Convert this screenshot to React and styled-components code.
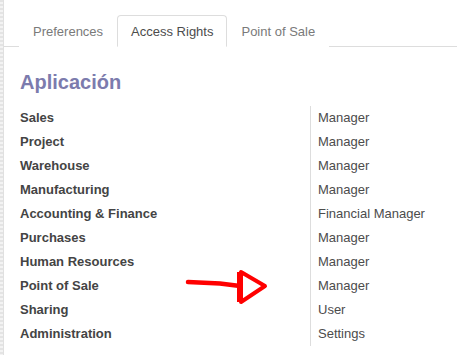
import React from "react";
import styled, { createGlobalStyle } from "styled-components";

const Global = createGlobalStyle`
  html, body { margin: 0; padding: 0; background: #fff; }
  body { font-family: "Liberation Sans", Arial, sans-serif; }
`;

const Page = styled.div`
  position: relative;
  display: flex;
  width: 457px;
  height: 355px;
  overflow: hidden;
  background: #fff;
`;

const EdgeStrip = styled.div`
  width: 3px;
  flex: none;
  background: repeating-linear-gradient(
    to bottom,
    #e4e4e4 0px,
    #e4e4e4 2px,
    #f3f3f3 2px,
    #f3f3f3 4px
  );
  border-right: 1px solid #e0e0e0;
`;

const Main = styled.div`
  flex: 1;
  display: flex;
  flex-direction: column;
`;

const TabBar = styled.div`
  display: flex;
  align-items: flex-end;
  height: 46px;
  padding-left: 15px;
  border-bottom: 1px solid #dddddd;
`;

const Tab = styled.div`
  box-sizing: border-box;
  height: 32px;
  margin-bottom: -1px;
  padding: 0 13px;
  display: flex;
  align-items: center;
  font-size: 13px;
  color: ${(p) => (p.$active ? "#4c4c4c" : "#7a7a7a")};
  background: #fff;
  border: 1px solid ${(p) => (p.$active ? "#dddddd" : "transparent")};
  border-bottom-color: ${(p) => (p.$active ? "#fff" : "transparent")};
  border-radius: 4px 4px 0 0;
`;

const Body = styled.div`
  padding: 23px 0 0 16px;
`;

const Heading = styled.h2`
  margin: 0 0 12px;
  font-size: 20px;
  line-height: 24px;
  font-weight: bold;
  color: #7c7bad;
`;

const Table = styled.div`
  display: grid;
  grid-template-columns: 290px 1fr;
`;

const Label = styled.div`
  height: 24px;
  line-height: 24px;
  font-size: 13px;
  font-weight: bold;
  color: #444444;
  white-space: nowrap;
`;

const Value = styled.div`
  height: 24px;
  line-height: 24px;
  font-size: 13px;
  color: #4c4c4c;
  padding-left: 7px;
  border-left: 1px solid #dddddd;
  white-space: nowrap;
`;

const Arrow = styled.svg`
  position: absolute;
  left: 180px;
  top: 264px;
`;

const rows = [
  ["Sales", "Manager"],
  ["Project", "Manager"],
  ["Warehouse", "Manager"],
  ["Manufacturing", "Manager"],
  ["Accounting & Finance", "Financial Manager"],
  ["Purchases", "Manager"],
  ["Human Resources", "Manager"],
  ["Point of Sale", "Manager"],
  ["Sharing", "User"],
  ["Administration", "Settings"],
];

export default function App() {
  return (
    <>
      <Global />
      <Page>
        <EdgeStrip />
        <Main>
          <TabBar>
            <Tab>Preferences</Tab>
            <Tab $active>Access Rights</Tab>
            <Tab>Point of Sale</Tab>
          </TabBar>
          <Body>
            <Heading>Aplicación</Heading>
            <Table>
              {rows.map(([l, v]) => (
                <React.Fragment key={l}>
                  <Label>{l}</Label>
                  <Value>{v}</Value>
                </React.Fragment>
              ))}
            </Table>
          </Body>
        </Main>
        <Arrow width="95" height="45" viewBox="0 0 95 45">
          <path d="M8 18 L40 19.5 L60 22" stroke="#f00" strokeWidth="4.5" fill="none" strokeLinecap="round" />
          <path d="M61 8 L61 38 L85 22 Z" stroke="#f00" strokeWidth="4" fill="none" strokeLinejoin="round" />
          <path d="M60 8 L60 38" stroke="#f00" strokeWidth="6" />
        </Arrow>
      </Page>
    </>
  );
}
